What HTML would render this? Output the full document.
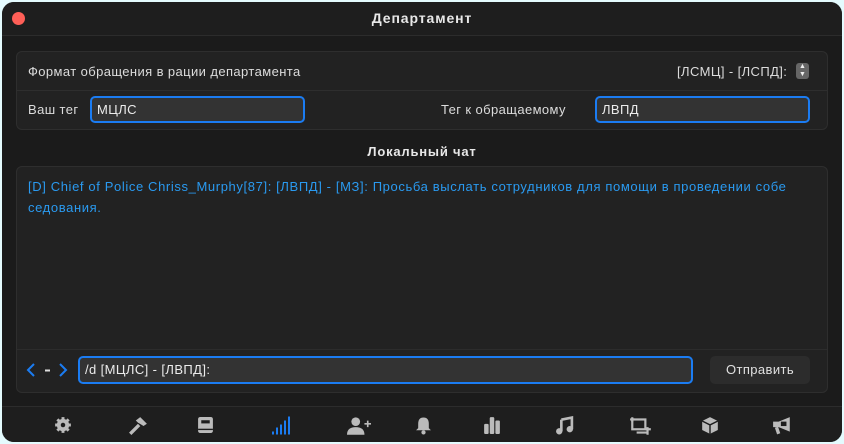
<!DOCTYPE html>
<html><head><meta charset="utf-8"><style>
*{box-sizing:border-box;margin:0;padding:0}
body{width:844px;height:444px;background:#e4fbfe;font-family:"Liberation Sans","DejaVu Sans",sans-serif;color:#e6e6e6;overflow:hidden;position:relative}
.win{position:absolute;left:2px;top:2px;width:840px;height:440px;background:#1b1b1b;border-radius:12px;overflow:hidden}
.title{position:absolute;left:0;top:0;width:840px;height:34px;background:#1e1e1e;border-bottom:1px solid #2c2c2c;text-align:center;line-height:33px;font-weight:bold;font-size:14px;letter-spacing:0.9px;color:#e8e8e8}
.dot{position:absolute;left:10px;top:10px;width:13px;height:13px;border-radius:50%;background:#fe5f57}
.panel{position:absolute;background:#222;border:1px solid #2e2e2e;border-radius:6px}
.t{position:absolute;font-size:13px;letter-spacing:0.4px;color:#dcdcdc;white-space:nowrap}
.inp{position:absolute;background:#333;border:2px solid #1b7cf2;border-radius:5px;font-size:13px;letter-spacing:0.4px;color:#ececec;padding-left:5px;line-height:23px}
.chat{position:absolute;left:26px;top:174px;width:800px;font-size:13px;color:#2a9af0;line-height:21px;letter-spacing:0.62px;white-space:nowrap}
.icons{position:absolute;top:404px;left:0;width:840px;height:36px;border-top:1px solid #2c2c2c;background:#1e1e1e}
.ic{position:absolute;top:9px}
</style></head><body>
<div class="win">
<div class="title"><div class="dot"></div>Департамент</div>
<div class="panel" style="left:14px;top:49px;width:812px;height:79px"></div>
<div style="position:absolute;left:15px;top:88px;width:810px;height:1px;background:#2e2e2e"></div>
<div class="t" style="left:26px;top:62px">Формат обращения в рации департамента</div>
<div class="t" style="left:675px;top:62px">[ЛСМЦ] - [ЛСПД]:</div>
<div style="position:absolute;left:794px;top:61px;width:13px;height:16px;background:#666;border-radius:3px;color:#eee;font-size:7px;line-height:8px;text-align:center">▲<br>▼</div>
<div class="t" style="left:26px;top:100px">Ваш тег</div>
<div class="inp" style="left:88px;top:94px;width:215px;height:27px">МЦЛС</div>
<div class="t" style="left:439px;top:100px">Тег к обращаемому</div>
<div class="inp" style="left:593px;top:94px;width:215px;height:27px">ЛВПД</div>
<div style="position:absolute;left:0;top:142px;width:840px;text-align:center;font-weight:bold;font-size:13px;letter-spacing:0.8px;color:#e8e8e8">Локальный чат</div>
<div class="panel" style="left:14px;top:164px;width:812px;height:227px"></div>
<div style="position:absolute;left:15px;top:347px;width:810px;height:1px;background:#2c2c2c"></div>
<div class="chat">[D] Chief of Police Chriss_Murphy[87]: [ЛВПД] - [МЗ]: Просьба выслать сотрудников для помощи в проведении собе<br>седования.</div>
<svg style="position:absolute;left:24px;top:360px" width="44" height="16" viewBox="0 0 44 16"><path d="M8 2 L2 8 L8 14" stroke="#1b7cf2" stroke-width="2" fill="none"/><path d="M19 8.5 h5" stroke="#ddd" stroke-width="2"/><path d="M34 2 L40 8 L34 14" stroke="#1b7cf2" stroke-width="2" fill="none"/></svg>
<div class="inp" style="left:76px;top:354px;width:615px;height:28px;line-height:24px">/d [МЦЛС] - [ЛВПД]:</div>
<div style="position:absolute;left:708px;top:354px;width:100px;height:28px;background:#2c2c2c;border-radius:5px;text-align:center;line-height:28px;font-size:13px;letter-spacing:0.4px;color:#e0e0e0">Отправить</div>
<div class="icons">
<svg class="ic" style="left:52px" width="18" height="18" viewBox="0 0 16 16"><circle cx="8" cy="8" r="5.5" fill="#bbb"/><g stroke="#bbb" stroke-width="2.6"><line x1="8" y1="1" x2="8" y2="15"/><line x1="1" y1="8" x2="15" y2="8"/><line x1="3" y1="3" x2="13" y2="13"/><line x1="13" y1="3" x2="3" y2="13"/></g><circle cx="8" cy="8" r="2" fill="#1e1e1e"/></svg>
<svg class="ic" style="left:126px" width="20" height="20" viewBox="0 0 18 18"><path d="M2 16 L10 8" stroke="#bbb" stroke-width="3"/><path d="M7 4 L11 1 L17 7 L14 9 L9 6Z" fill="#bbb"/></svg>
<svg class="ic" style="left:195px" width="17" height="18" viewBox="0 0 16 17"><rect x="1" y="1" width="14" height="15" rx="2" fill="#bbb"/><rect x="4" y="4" width="8" height="3" fill="#1e1e1e"/><rect x="1" y="12" width="14" height="1.3" fill="#1e1e1e"/></svg>
<svg class="ic" style="left:270px" width="20" height="19" viewBox="0 0 20 18"><g fill="#1b7cf2"><rect x="0" y="15" width="2" height="3"/><rect x="4" y="11" width="2" height="7"/><rect x="8" y="8" width="2" height="10"/><rect x="12" y="4" width="2" height="14"/><rect x="16" y="0" width="2" height="18"/></g></svg>
<svg class="ic" style="left:345px" width="24" height="19" viewBox="0 0 22 17"><circle cx="8" cy="5" r="4" fill="#bbb"/><path d="M0 17 Q0 10 8 10 Q16 10 16 17Z" fill="#bbb"/><path d="M19 4 v6 M16 7 h6" stroke="#bbb" stroke-width="1.5"/></svg>
<svg class="ic" style="left:413px" width="17" height="19" viewBox="0 0 16 17"><path d="M8 1 Q3 1 3 7 L3 11 L1 13 L15 13 L13 11 L13 7 Q13 1 8 1Z" fill="#bbb"/><circle cx="8" cy="15" r="2" fill="#bbb"/></svg>
<svg class="ic" style="left:481px" width="18" height="18" viewBox="0 0 16 16"><g fill="#bbb"><rect x="1" y="7" width="4" height="9" rx="1"/><rect x="6" y="1" width="4" height="15" rx="1"/><rect x="11" y="4" width="4" height="12" rx="1"/></g></svg>
<svg class="ic" style="left:553px" width="19" height="19" viewBox="0 0 18 17"><path d="M6 3 L16 1 L16 12" stroke="#bbb" stroke-width="2.5" fill="none"/><path d="M6 3 L6 14" stroke="#bbb" stroke-width="2.5"/><circle cx="4" cy="14" r="3" fill="#bbb"/><circle cx="14" cy="12" r="3" fill="#bbb"/></svg>
<svg class="ic" style="left:627px" width="24" height="20" viewBox="0 0 22 18"><rect x="3" y="3" width="12" height="9" fill="none" stroke="#bbb" stroke-width="2"/><path d="M1 3h4M3 1v4M15 12h5M17 10v7M7 15h10" stroke="#bbb" stroke-width="2"/></svg>
<svg class="ic" style="left:699px" width="18" height="19" viewBox="0 0 16 17"><path d="M8 1 L15 4.5 L15 12.5 L8 16 L1 12.5 L1 4.5Z" fill="#bbb"/><path d="M1 4.5 L8 8 L15 4.5 M8 8 L8 16" stroke="#1e1e1e" stroke-width="1.3" fill="none"/></svg>
<svg class="ic" style="left:770px" width="20" height="19" viewBox="0 0 18 17"><path d="M1 5 L6 5 L16 1 L16 14 L6 10 L1 10Z" fill="#bbb"/><path d="M4 10 L6 16" stroke="#bbb" stroke-width="3"/><rect x="8" y="5" width="5" height="4" fill="#1e1e1e"/></svg>
</div>
</div>
</body></html>
